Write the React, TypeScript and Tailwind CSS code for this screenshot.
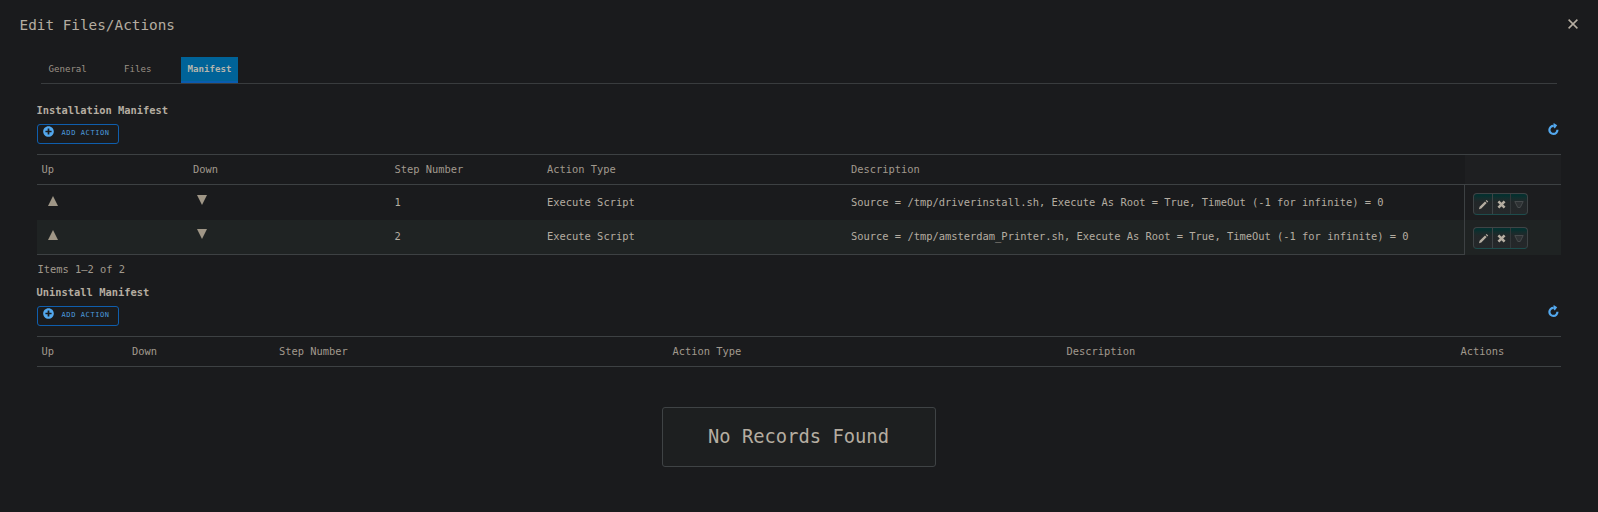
import { FaPlusCircle } from "react-icons/fa";

const Line = "border-[#3d4143]";

function Refresh() {
  return (
    <svg width="11" height="12" viewBox="0 0 11 12" className="-mt-px mr-[2px] block">
      <path d="M5.6 2.9 A4 4 0 1 0 9.4 6.7" fill="none" stroke="#53a8ee" strokeWidth="2.2" />
      <path d="M5.6 0 L9.2 2.3 L6.8 5.4 L5.4 4 Z" fill="#53a8ee" />
    </svg>
  );
}

function SectionHead({ title }: { title: string }) {
  return (
    <div className="h-[52px]">
      <h2 className="-ml-[0.5px] h-[22px] text-[10.42px] leading-[16px] font-bold">{title}</h2>
      <div className="flex items-start justify-between">
        <button className="flex h-5 w-[82px] rounded-[3px] border border-[#0f5ead] pl-[6px] text-[#53a8ee]">
          <FaPlusCircle className="mt-px -ml-px h-[11px] w-[11px]" />
          <span className="ml-[7.5px] text-[7px] leading-[16px] tracking-[0.6px] text-[#4b9ade]">ADD ACTION</span>
        </button>
        <Refresh />
      </div>
    </div>
  );
}

function Actions() {
  return (
    <div className="flex h-[22px] w-[55px] overflow-hidden rounded-[4px] border border-[#3f4446] border-b-[#1d4c4c] bg-linear-to-b from-[#06302f] from-10% via-[#222729] via-40% to-[#25282a]">
      <span className="flex w-[19px] items-center justify-center border-r border-[#3f4446] pt-px">
        <svg width="11" height="11" viewBox="0 0 11 11">
          <path d="M1 10.2 L1.6 7.8 L7 2.4 L8.7 4.1 L3.3 9.5 Z M7.7 1.7 L8.6 0.9 L10.2 2.5 L9.4 3.4 Z" fill="#b3aca0" />
        </svg>
      </span>
      <span className="flex w-[18px] items-center justify-center border-r border-[#33383a] pt-px">
        <svg width="9" height="9" viewBox="0 0 9 9">
          <path d="M1.4 1.4 L7.6 7.6 M7.6 1.4 L1.4 7.6" stroke="#b3aca0" strokeWidth="2.6" />
        </svg>
      </span>
      <span className="flex flex-1 items-center justify-center">
        <svg width="10" height="9" viewBox="0 0 10 9">
          <path d="M0.8 1.5 H9.2 L6.2 7.5 H3.8 Z" fill="#2e3234" stroke="#464a4c" strokeWidth="1" />
        </svg>
      </span>
    </div>
  );
}

const rows = [
  { n: "1", d: "Source = /tmp/driverinstall.sh, Execute As Root = True, TimeOut (-1 for infinite) = 0" },
  { n: "2", d: "Source = /tmp/amsterdam_Printer.sh, Execute As Root = True, TimeOut (-1 for infinite) = 0" },
];

export default function App() {
  return (
    <main className="h-[512px] w-[1598px] overflow-hidden bg-[#1a1b1d] font-['DejaVu_Sans_Mono',monospace] text-[10.4px] text-[#b5ada1]">
      <header className="flex h-[57px] justify-between pt-[14px] pr-[20px] pl-[19.5px]">
        <h1 className="text-[14.35px] leading-[22px]">Edit Files/Actions</h1>
        <svg width="10" height="10" viewBox="0 0 10 10" className="mt-[5px]">
          <path d="M0.6 0.6 L9.4 9.4 M9.4 0.6 L0.6 9.4" stroke="#b5ada1" strokeWidth="1.5" />
        </svg>
      </header>
      <nav className="mr-[41px] ml-[41px] flex h-[27px] border-b border-[#393c3e] text-[9.1px] leading-[24px] text-[#9a9286]">
        <span className="w-[75px] pl-[7.5px]">General</span>
        <span className="w-[65px] pl-[8px]">Files</span>
        <span className="w-[57px] border-b-2 border-[#0a5cae] bg-[#006398] text-center font-bold text-[#b5b5ad]">Manifest</span>
      </nav>

      <div className="mr-[37px] ml-[37px]">
        <section className="pt-[18px]">
          <SectionHead title="Installation Manifest" />
          <div className={"flex h-[31px] border-y leading-[29px] text-[#a1998d] " + Line}>
            <span className="w-[156px] pl-[4.5px]">Up</span>
            <span className="w-[201.5px]">Down</span>
            <span className="w-[152.5px]">Step Number</span>
            <span className="w-[304px]">Action Type</span>
            <span className="flex-1">Description</span>
            <span className="w-[96px] bg-[#1e1f21]" />
          </div>
          {rows.map((r, i) => (
            <div key={r.n} className={i ? "flex h-[35px] bg-[#1f2323]" : "flex h-[35px]"}>
              <div className={"flex w-[1428px] border-r text-[10.415px] " + Line + (i ? " border-b leading-[33px]" : " leading-[35px]")}>
                <span className={i ? "w-[156px] pt-[10px] pl-[11px]" : "w-[156px] pt-[11px] pl-[11px]"}>
                  <svg width="10" height="10" viewBox="0 0 10 10" className="block"><path d="M5 0 L10 10 H0 Z" fill="#9f9686" /></svg>
                </span>
                <span className={i ? "w-[201.5px] pt-[9px] pl-[4px]" : "w-[201.5px] pt-[10px] pl-[4px]"}>
                  <svg width="10" height="10" viewBox="0 0 10 10" className="block"><path d="M5 10 L10 0 H0 Z" fill="#9f9686" /></svg>
                </span>
                <span className="w-[152.5px]">{r.n}</span>
                <span className="w-[304px]">Execute Script</span>
                <span className="whitespace-nowrap">{r.d}</span>
              </div>
              <div className={i ? "pt-[7px] pl-[8px]" : "flex-1 bg-[#1c1d1f] pt-[8px] pl-[8px]"}>
                <Actions />
              </div>
            </div>
          ))}
          <p className="h-[29px] pt-[6px] pl-[0.5px] leading-[16px] text-[#a1998d]">Items 1–2 of 2</p>
        </section>

        <section>
          <SectionHead title="Uninstall Manifest" />
          <div className={"flex h-[31px] border-y leading-[29px] text-[#a1998d] " + Line}>
            <span className="w-[95px] pl-[4.5px]">Up</span>
            <span className="w-[147px]">Down</span>
            <span className="w-[393.5px]">Step Number</span>
            <span className="w-[394px]">Action Type</span>
            <span className="w-[394px]">Description</span>
            <span>Actions</span>
          </div>
          <div className="flex justify-center pt-[40px]">
            <div className="h-[60px] w-[274px] rounded-[3px] border border-[#3f4345] bg-[#1d1f20] pr-px text-center text-[18.8px] leading-[58px]">
              No Records Found
            </div>
          </div>
        </section>
      </div>
    </main>
  );
}
